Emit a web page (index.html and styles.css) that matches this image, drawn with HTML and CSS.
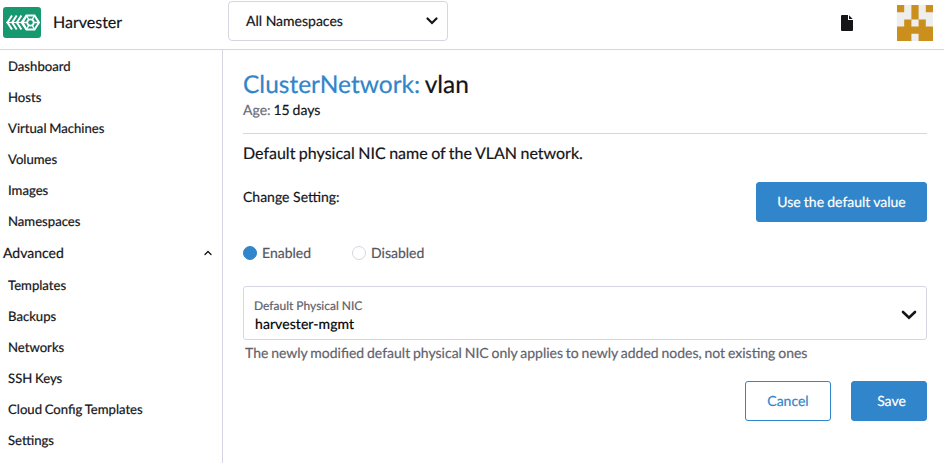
FILE: index.html
```html
<!DOCTYPE html>
<html lang="en">
<head>
<meta charset="utf-8">
<title>Harvester</title>
<link rel="stylesheet" href="styles.css">
</head>
<body>
<header class="header">
  <svg class="logo" viewBox="0 0 38 31" width="38" height="31">
    <rect width="38" height="31" rx="3" fill="#17996f"/>
    <g fill="none" stroke="#fff" stroke-width="2">
      <path d="M9 8.500 4.500 15.500 9 22.500M13.700 8.500 9.200 15.500 13.700 22.500M18.400 8.500 13.900 15.500 18.400 22.500M23.500 8.500 18.600 15.500 23.500 22.500"/>
      <path d="M3 15.500H20" stroke-width="1.200"/>
      <path d="M23.500 8.500h8l4.500 7-4.500 7h-8l-4-7z"/>
      <circle cx="27.500" cy="15.500" r="3.200" stroke-width="1.800"/>
      <path d="M23.500 8.500l2.200 4M31.500 8.500l-2.200 4M23.500 22.500l2.200-4M31.500 22.500l-2.200-4M19.500 15.500H24M31 15.500H35" stroke-width="1.400"/>
    </g>
  </svg>
  <div class="brand">Harvester</div>
  <div class="namespace">
    <span>All Namespaces</span>
    <svg width="12" height="8" viewBox="0 0 12 8"><path d="M1.500 1.500 6 6l4.500-4.500" fill="none" stroke="#141419" stroke-width="2.200" stroke-linecap="round"/></svg>
  </div>
  <svg class="doc" width="12" height="16" viewBox="0 0 12 16"><path d="M1 0h6v5h5v10a1 1 0 0 1-1 1H1a1 1 0 0 1-1-1V1a1 1 0 0 1 1-1zM8 .3 11.700 4H8z" fill="#141419"/></svg>
  <svg class="avatar" width="36" height="36" viewBox="0 0 5 5"><rect width="5" height="5" fill="#eee"/><path d="M0 0h1v1H0zM2 0h1v2H2zM4 0h1v1H4zM1 2h1v1H1zM3 2h1v1H3zM0 3h5v2H3V4H2v1H0z" fill="#cb8f1e"/></svg>
</header>
<div class="body">
  <nav class="nav">
    <a>Dashboard</a><a>Hosts</a><a>Virtual Machines</a><a>Volumes</a><a>Images</a><a>Namespaces</a>
    <div class="group"><span>Advanced</span><svg width="8" height="6" viewBox="0 0 8 6"><path d="M1 4.500 4 1.500l3 3" fill="none" stroke="#141419" stroke-width="1.300" stroke-linecap="round"/></svg></div>
    <a>Templates</a><a>Backups</a><a>Networks</a><a>SSH Keys</a><a>Cloud Config Templates</a><a>Settings</a>
  </nav>
  <main class="main">
    <div class="masthead">
      <h1><span class="type">ClusterNetwork:</span> vlan</h1>
      <div class="age"><span>Age:</span> 15 days</div>
    </div>
    <h2>Default physical NIC name of the VLAN network.</h2>
    <div class="setting">
      <span>Change Setting:</span>
      <button class="btn primary wide">Use the default value</button>
    </div>
    <div class="radios">
      <label class="radio"><i class="dot on"></i>Enabled</label>
      <label class="radio"><i class="dot"></i>Disabled</label>
    </div>
    <div class="select">
      <div>
        <div class="label">Default Physical NIC</div>
        <div class="value">harvester-mgmt</div>
      </div>
      <svg width="16" height="10" viewBox="0 0 16 10"><path d="M2 2l6 5.600L14 2" fill="none" stroke="#141419" stroke-width="2.600" stroke-linecap="round"/></svg>
    </div>
    <p class="hint">The newly modified default physical NIC only applies to newly added nodes, not existing ones</p>
    <div class="actions">
      <button class="btn cancel">Cancel</button>
      <button class="btn primary save">Save</button>
    </div>
  </main>
</div>
</body>
</html>
```
FILE: styles.css
```css
* { box-sizing: border-box; }
body { margin: 0; height: 463px; overflow: hidden; background: #fff; color: #141419; font: 14px/20px Lato, "Liberation Sans", sans-serif; text-rendering: geometricPrecision; -webkit-text-stroke: 0.2px; }
svg { display: block; flex: none; }
.header { display: flex; height: 50px; border-bottom: 1px solid #d6d6e2; }
.logo { margin: 7px 0 0 3px; }
.brand { flex: none; width: 187px; padding: 13px 0 0 12px; font-size: 16px; }
.namespace { display: flex; align-items: center; justify-content: space-between; width: 220px; height: 40px; margin-top: 1px; padding: 0 9px 0 17px; border: 1px solid #d6d6e2; border-radius: 4px; }
.doc { margin: 15px 44px 0 auto; }
.avatar { margin: 5px 11px 0 0; }
.body { display: flex; height: 413px; }
.nav { width: 223px; flex: none; border-right: 1px solid #d6d6e2; padding-top: 1px; }
.nav a { display: block; height: 31px; padding: 5px 0 0 8px; font-size: 13.150px; word-spacing: -0.7px; }
.group { display: flex; align-items: center; justify-content: space-between; height: 33px; padding: 0 10px 1px 3px; }
.main { flex: 1; padding: 19px 17px 0 20px; }
.masthead { height: 65px; border-bottom: 1px solid #d6d6e2; }
h1 { margin: 0; font-size: 24.500px; line-height: 31px; font-weight: 400; word-spacing: -1.200px; }
.type { color: #3185ca; }
.age { line-height: 19px; word-spacing: -0.7px; }
.age span { color: #6c6c76; }
h2 { margin: 10px 0 0; font-size: 16px; line-height: 20px; font-weight: 400; word-spacing: -0.6px; }
.setting { display: flex; justify-content: space-between; margin-top: 18px; }
.setting > span { padding-top: 5px; }
.btn { height: 40px; padding: 0; border: 1px solid #3185ca; border-radius: 3px; font: inherit; text-rendering: inherit; }
.primary { background: #3185ca; color: #fff; }
.wide { width: 171px; word-spacing: -0.4px; }
.radios { display: flex; gap: 41px; margin-top: 21px; color: #55555e; }
.radio { display: flex; align-items: center; gap: 5px; }
.dot { width: 14px; height: 14px; border: 1px solid #d6d6e2; border-radius: 50%; }
.dot.on { background: #3185ca; border-color: #3185ca; }
.select { display: flex; align-items: center; justify-content: space-between; height: 54px; margin-top: 23px; padding: 3px 9px 0 10px; border: 1px solid #d6d6e2; border-radius: 3px; }
.label { padding-top: 1px; color: #62626c; font-size: 12px; line-height: 17px; }
.value { padding-left: 1px; color: #000; letter-spacing: 0.08px; }
.hint { margin: 4px 0 0 2px; color: #62626c; line-height: 18px; word-spacing: -0.76px; }
.actions { display: flex; justify-content: flex-end; gap: 20px; margin-top: 19px; }
.cancel { width: 86px; background: #fff; color: #3185ca; }
.save { width: 76px; padding-left: 5px; }
```
